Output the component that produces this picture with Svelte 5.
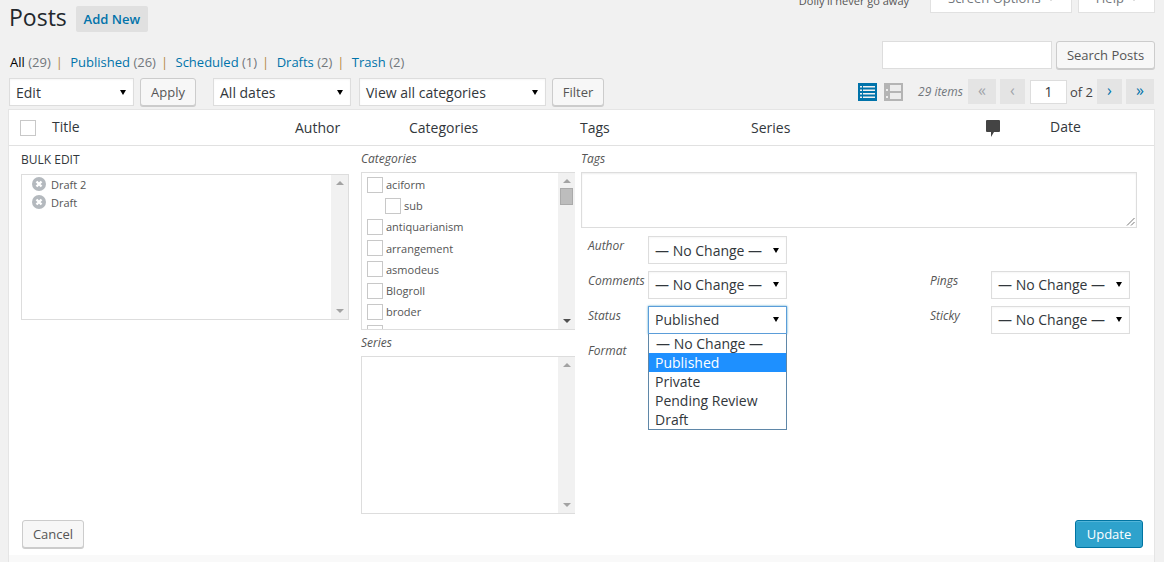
<script>
	const filters = [
		{ name: "All", count: 29, current: true },
		{ name: "Published", count: 26 },
		{ name: "Scheduled", count: 1 },
		{ name: "Drafts", count: 2 },
		{ name: "Trash", count: 2 }
	];
	const drafts = ["Draft 2", "Draft"];
	const categories = [
		{ name: "aciform" },
		{ name: "sub", child: true },
		{ name: "antiquarianism" },
		{ name: "arrangement" },
		{ name: "asmodeus" },
		{ name: "Blogroll" },
		{ name: "broder" },
		{ name: "buying" }
	];
	const statuses = ["— No Change —", "Published", "Private", "Pending Review", "Draft"];
</script>

{#snippet pick(text, cls = "")}
	<div class="select {cls}"><span>{text}</span><i class="caret"></i></div>
{/snippet}

{#snippet scrollbar(thumb = false)}
	<div class="scrollbar" class:active={thumb}>
		<i class="up"></i>
		{#if thumb}<b class="thumb"></b>{/if}
		<i class="down"></i>
	</div>
{/snippet}

<main>
	<header class="top">
		<h1>Posts</h1>
		<a class="add" href="#new">Add New</a>
		<div class="meta">
			<p class="dolly">Dolly'll never go away</p>
			<div class="tab options">Screen Options <i class="tab-caret"></i></div>
			<div class="tab help">Help <i class="tab-caret"></i></div>
		</div>
	</header>

	<div class="filter-row">
		<ul class="subsub">
			{#each filters as f, i}
				<li>
					{#if i > 0}<span class="sep">|</span>{/if}
					<a href="#f" class:current={f.current}>{f.name}</a>
					<span class="count">({f.count})</span>
				</li>
			{/each}
		</ul>
		<div class="search">
			<input type="text" aria-label="Search" />
			<button class="btn search-btn">Search Posts</button>
		</div>
	</div>

	<div class="tablenav">
		{@render pick("Edit", "action low")}
		<button class="btn apply">Apply</button>
		{@render pick("All dates", "dates low")}
		{@render pick("View all categories", "cats low")}
		<button class="btn filter">Filter</button>

		<div class="nav-right">
			<svg class="view" width="19" height="18" viewBox="0 0 19 18" aria-hidden="true">
				<path fill="#0073aa" d="M0 0h19v18H0z" />
				<path fill="#f1f1f1" d="M2 3h2v1.500H2zM5 3h12v1.500H5zM2 6.500h2V8H2zM5 6.500h12V8H5zM2 10h2v1.500H2zM5 10h12v1.500H5zM2 13.500h2V15H2zM5 13.500h12V15H5z" />
			</svg>
			<svg class="view second" width="19" height="18" viewBox="0 0 19 18" aria-hidden="true">
				<path fill="#b4b4b4" d="M0 0h19v18H0z" />
				<path fill="#ececec" d="M6 2h11v6H6zM6 10h11v6H6zM2 6h2v2H2zM2 13h2v2H2z" />
			</svg>
			<em class="items">29 items</em>
			<span class="page off wide">«</span>
			<span class="page off">‹</span>
			<input class="current-page" type="text" value="1" aria-label="Page" />
			<span class="of">of 2</span>
			<a class="page" href="#next">›</a>
			<a class="page wide" href="#last">»</a>
		</div>
	</div>

	<section class="table">
		<div class="thead">
			<span class="col-title"><i class="check"></i><span class="raised">Title</span></span>
			<span>Author</span>
			<span>Categories</span>
			<span>Tags</span>
			<span>Series</span>
			<span class="col-comments">
				<svg width="14" height="17" viewBox="0 0 14 17" aria-hidden="true">
					<path fill="#444" d="M1 0h12a1 1 0 0 1 1 1v10a1 1 0 0 1-1 1H8l-3 5v-5H1a1 1 0 0 1-1-1V1a1 1 0 0 1 1-1z" />
				</svg>
			</span>
			<span class="col-date">Date</span>
		</div>

		<div class="bulk-area">
			<div>
				<h4>BULK EDIT</h4>
				<div class="box titles">
					<ul>
						{#each drafts as d}
							<li>
								<svg width="14" height="14" viewBox="0 0 14 14" aria-hidden="true">
									<circle cx="7" cy="7" r="7" fill="#b4b9be" />
									<path d="M4.500 4.500l5 5M9.500 4.500l-5 5" stroke="#fff" stroke-width="2.400" />
								</svg>
								{d}
							</li>
						{/each}
					</ul>
					{@render scrollbar()}
				</div>
			</div>

			<div class="col-mid">
				<span class="label">Categories</span>
				<div class="box cat-box">
					<ul>
						{#each categories as c}
							<li class:child={c.child}><i class="check"></i>{c.name}</li>
						{/each}
					</ul>
					{@render scrollbar(true)}
				</div>
				<span class="label">Series</span>
				<div class="box series-box">
					<div class="fill"></div>
					{@render scrollbar()}
				</div>
			</div>

			<div class="col-right">
				<span class="label">Tags</span>
				<div class="tags-area">
					<svg width="9" height="9" viewBox="0 0 9 9" aria-hidden="true">
						<path d="M8.500 1L1 8.500M8.500 5L5 8.500" stroke="#777" fill="none" />
					</svg>
				</div>
				<div class="fields">
					<div class="fields-a">
						<div class="field"><span class="label">Author</span>{@render pick("— No Change —", "low")}</div>
						<div class="field"><span class="label">Comments</span>{@render pick("— No Change —")}</div>
						<div class="field">
							<span class="label">Status</span>
							<div class="open-wrap">
								{@render pick("Published", "focus")}
								<ul class="dropdown">
									{#each statuses as s}
										<li class:on={s === "Published"}>{s}</li>
									{/each}
								</ul>
							</div>
						</div>
						<div class="field"><span class="label">Format</span></div>
					</div>
					<div class="fields-b">
						<div class="field"><span class="label">Pings</span>{@render pick("— No Change —")}</div>
						<div class="field"><span class="label">Sticky</span>{@render pick("— No Change —")}</div>
					</div>
				</div>
			</div>
		</div>

		<div class="actions">
			<button class="btn cancel">Cancel</button>
			<button class="btn update">Update</button>
		</div>
		<div class="strip"></div>
	</section>
</main>

<style>
	:global(body) {
		margin: 0;
		background: #f1f1f1;
		overflow: hidden;
	}

	main {
		height: 562px;
		overflow: hidden;
		padding: 0 9px;
		font-family: "Open Sans", sans-serif;
		font-size: 13px;
		color: #444;
		box-sizing: border-box;
	}

	ul {
		list-style: none;
		margin: 0;
		padding: 0;
	}

	a {
		color: #0073aa;
		text-decoration: none;
	}

	/* top */
	.top {
		display: flex;
		align-items: flex-start;
		height: 41px;
	}

	h1 {
		margin: 3px 0 0;
		font-size: 23px;
		line-height: 29px;
		font-weight: 400;
		color: #23282d;
	}

	.add {
		margin: 6px 0 0 9px;
		width: 72px;
		height: 26px;
		line-height: 26px;
		text-align: center;
		background: #e0e0e0;
		border-radius: 2px;
		font-size: 13px;
		font-weight: 600;
	}

	.meta {
		margin-left: auto;
		display: flex;
		align-items: flex-start;
		gap: 6px;
		margin-top: -14px;
	}

	.dolly {
		margin: 6px 15px 0 0;
		font-size: 11px;
		line-height: 17px;
		color: #555;
	}

	.tab {
		height: 27px;
		background: #fff;
		border: 1px solid #e1e1e1;
		box-sizing: border-box;
		font-size: 13px;
		line-height: 20px;
		padding-top: 1px;
		text-align: center;
		color: #72777c;
	}

	.options { width: 142px; }
	.help { width: 77px; }

	.tab-caret {
		display: inline-block;
		width: 0;
		height: 0;
		border: 3px solid transparent;
		border-top: 4px solid #aaa;
		margin-left: 4px;
		vertical-align: -1px;
	}

	/* filter links, search */
	.filter-row {
		display: flex;
		justify-content: space-between;
		align-items: flex-start;
		height: 37px;
	}

	.subsub {
		display: flex;
		margin-top: 12px;
		margin-left: 1px;
		line-height: 18px;
		font-size: 13px;
	}

	.sep {
		color: #b4873f;
		margin: 0 4px 0 5px;
	}

	.subsub .current {
		color: #000;
	}

	.count {
		color: #72777c;
	}

	.search {
		display: flex;
		gap: 4px;
	}

	.search input {
		width: 170px;
		height: 28px;
		box-sizing: border-box;
		border: 1px solid #ddd;
		background: #fff;
		padding: 0;
		outline: none;
	}

	.btn {
		font-family: inherit;
		font-size: 13px;
		height: 28px;
		padding: 0;
		background: #f7f7f7;
		border: 1px solid #ccc;
		border-radius: 3px;
		box-shadow: 0 1px 0 #ccc;
		color: #555;
		box-sizing: border-box;
	}

	.search-btn { width: 99px; }

	/* selects drawn by hand, one is shown open */
	.select {
		display: flex;
		align-items: center;
		justify-content: space-between;
		width: 139px;
		height: 28px;
		box-sizing: border-box;
		border: 1px solid #ddd;
		background: #fff;
		padding: 0 7px 1px 6px;
		font-size: 14px;
		color: #32373c;
		box-shadow: inset 0 1px 2px rgba(0, 0, 0, 0.04);
	}

	.select.low {
		padding-bottom: 0;
	}

	.select.focus {
		border-color: #5b9dd9;
		box-shadow: 0 0 2px rgba(30, 140, 190, 0.8);
	}

	.caret {
		width: 0;
		height: 0;
		border: 3.500px solid transparent;
		border-top: 5px solid #000;
		border-bottom: 0;
	}

	.tablenav {
		display: flex;
		align-items: flex-start;
		height: 31px;
	}

	.apply {
		width: 56px;
		margin: 0 17px 0 6px;
	}

	.select.action { width: 125px; }
	.select.dates { width: 138px; margin-right: 8px; }
	.select.cats { width: 187px; }

	.filter {
		width: 52px;
		margin-left: 6px;
	}

	.nav-right {
		margin-left: auto;
		margin-top: 1px;
		display: flex;
		align-items: center;
		height: 25px;
		margin-right: 1px;
	}

	.second {
		margin-left: 7px;
	}

	.items {
		margin: 0 5px 0 15px;
		font-size: 12px;
		color: #72777c;
	}

	.page {
		width: 25px;
		height: 25px;
		line-height: 23px;
		text-align: center;
		background: #e4e4e4;
		font-size: 16px;
		margin-right: 4px;
	}

	.page.wide { width: 28px; }
	.page:last-child { margin-right: 0; }

	.page.off {
		color: #a0a5aa;
	}

	.current-page {
		width: 37px;
		height: 24px;
		box-sizing: border-box;
		border: 1px solid #ddd;
		background: #fff;
		text-align: center;
		font-family: inherit;
		font-size: 14px;
		color: #32373c;
		padding: 0;
		margin-left: 1px;
		outline: none;
	}

	.of {
		margin: 0 4px 0 3px;
		font-size: 13px;
	}

	/* table */
	.table {
		margin-left: -1px;
		border: 1px solid #e5e5e5;
		background: #fff;
		height: 480px;
		box-sizing: border-box;
	}

	.thead {
		display: grid;
		grid-template-columns: 286px 114px 171px 171px 235px 64px 1fr;
		height: 35px;
		border-bottom: 1px solid #e1e1e1;
		font-size: 14px;
		line-height: 35px;
		color: #32373c;
	}

	.col-title {
		display: flex;
		align-items: center;
		padding-left: 11px;
		margin-top: -1px;
	}

	.col-title .check {
		margin-right: 16px;
	}

	.raised {
		margin-bottom: 2px;
	}

	.col-date {
		line-height: 33px;
	}

	.col-comments svg {
		display: block;
		margin-top: 10px;
	}

	.check {
		display: block;
		flex: none;
		width: 16px;
		height: 16px;
		box-sizing: border-box;
		border: 1px solid #c8c8c8;
		background: #fff;
	}

	.bulk-area {
		display: grid;
		grid-template-columns: 328px 226px 562px;
		padding-left: 12px;
		height: 374px;
	}

	.col-mid { margin-left: 12px; }
	.col-right { margin-left: 6px; }

	h4 {
		margin: 6px 0 0;
		font-size: 12px;
		line-height: 16px;
		font-weight: 500;
		color: #32373c;
		height: 22px;
	}

	.label {
		display: block;
		font-size: 12px;
		font-style: italic;
		line-height: 16px;
		color: #555;
		margin-top: 5px;
		height: 21px;
	}

	.box {
		display: flex;
		justify-content: space-between;
		box-sizing: border-box;
		border: 1px solid #ddd;
		border-right: 0;
		overflow: hidden;
		background: #fff;
	}

	.titles {
		height: 146px;
		border-right: 1px solid #ddd;
	}

	.titles ul {
		padding: 0 0 0 10px;
		font-size: 11px;
		color: #555;
	}

	.titles li {
		display: flex;
		align-items: center;
		gap: 5px;
		height: 18px;
	}

	.cat-box { height: 158px; }

	.cat-box ul {
		padding: 1px 0 0 5px;
		font-size: 11px;
		color: #555;
	}

	.cat-box li {
		display: flex;
		align-items: center;
		gap: 3px;
		height: 21.200px;
	}

	.cat-box li.child {
		padding-left: 18px;
	}

	.series-box { height: 158px; }

	.fill { flex: 1; }

	.scrollbar {
		flex: none;
		display: flex;
		flex-direction: column;
		align-items: center;
		width: 17px;
		background: #f1f1f1;
		padding: 6px 0;
		box-sizing: border-box;
	}

	.scrollbar .up {
		border: 4px solid transparent;
		border-top: 0;
		border-bottom: 4px solid #a3a3a3;
	}

	.scrollbar .thumb {
		width: 13px;
		height: 17px;
		background: #bdbdbd;
		border: 1px solid #aaa;
		box-sizing: border-box;
		margin-top: 5px;
	}

	.scrollbar .down {
		margin-top: auto;
		border: 4px solid transparent;
		border-bottom: 0;
		border-top: 4px solid #a3a3a3;
	}

	.scrollbar.active .down {
		border-top-color: #505050;
	}

	.tags-area {
		display: flex;
		align-items: flex-end;
		justify-content: flex-end;
		height: 56px;
		width: 556px;
		box-sizing: border-box;
		border: 1px solid #ddd;
		padding: 0 1px 1px 0;
		box-shadow: inset 0 1px 2px rgba(0, 0, 0, 0.07);
	}

	.fields {
		display: flex;
		padding-left: 7px;
		margin-top: 8px;
	}

	.fields-a {
		width: 342px;
	}

	.fields-b {
		margin-top: 35px;
	}

	.field {
		display: flex;
		height: 35px;
		align-items: flex-start;
	}

	.field .label {
		width: 60px;
		margin: 2px 0 0;
	}

	.fields-b .label {
		width: 61px;
	}

	.open-wrap {
		position: relative;
		z-index: 2;
	}

	.dropdown {
		box-sizing: border-box;
		width: 139px;
		height: 96px;
		background: #fff;
		border: 1px solid #5f87a8;
		border-top: 0;
		font-size: 14px;
		color: #32373c;
		position: absolute;
		top: 28px;
		left: 0;
	}

	.dropdown li {
		height: 19px;
		line-height: 19px;
		padding-left: 6px;
		white-space: nowrap;
	}

	.dropdown li:first-child {
		padding-top: 1px;
		height: 18px;
		line-height: 18px;
		padding-left: 7px;
	}

	.dropdown .on {
		background: #1e90ff;
		color: #fff;
	}

	.actions {
		display: flex;
		justify-content: space-between;
		padding: 0 11px 0 13px;
		height: 35px;
	}

	.cancel { width: 62px; }

	.update {
		width: 68px;
		background: #2ea2cc;
		border-color: #0074a2;
		color: #fff;
		box-shadow: inset 0 1px 0 rgba(120, 200, 230, 0.5);
	}

	.strip {
		height: 12px;
		background: #f9f9f9;
	}
</style>
